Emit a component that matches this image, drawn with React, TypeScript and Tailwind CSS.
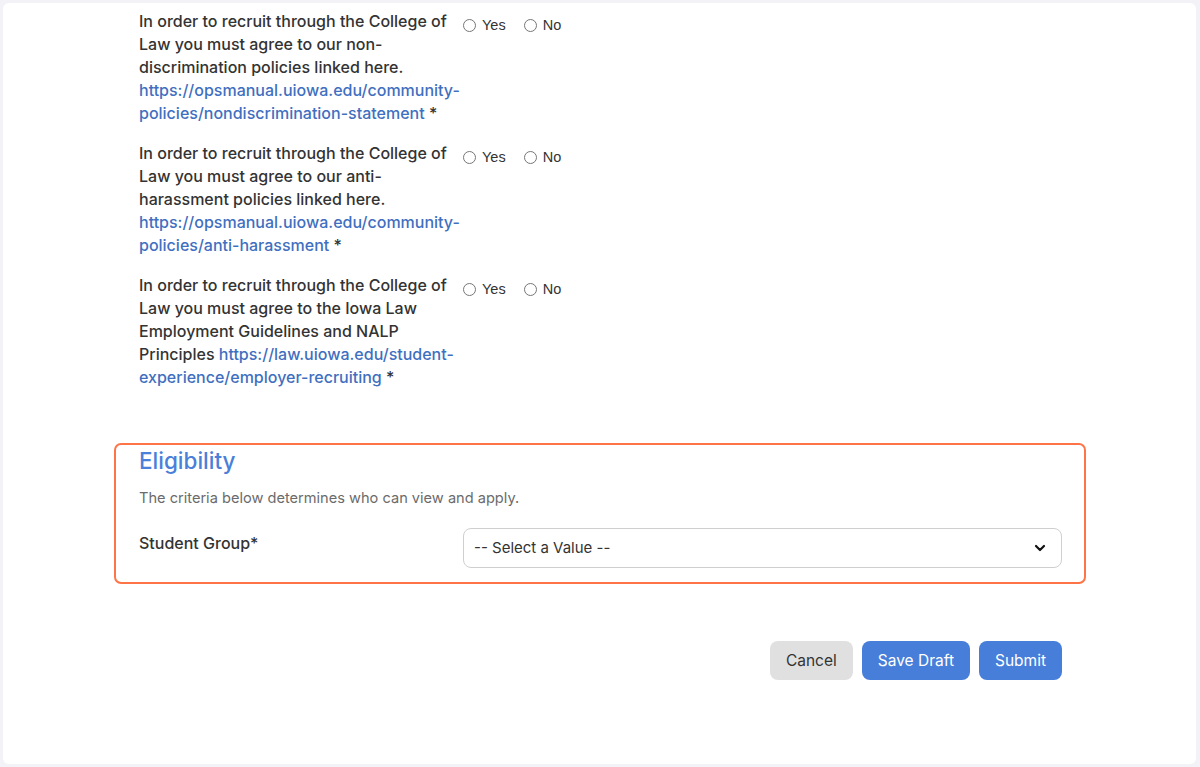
import React from "react";

const Radio = ({ label }: { label: string }) => (
  <label className="flex items-center gap-[6px] text-[14.5px] text-[#333] font-['Liberation_Sans',Arial,sans-serif]">
    <span className="w-[13px] h-[13px] rounded-full border border-[#767676] bg-white inline-block" />
    <span>{label}</span>
  </label>
);

const Question = ({ lines }: { lines: React.ReactNode }) => (
  <div className="grid grid-cols-[324px_auto] items-start">
    <div className="text-[16px] leading-[23px] font-medium text-[#333]">{lines}</div>
    <div className="flex items-center gap-[18px] pt-[6px] h-[25px]">
      <Radio label="Yes" />
      <Radio label="No" />
    </div>
  </div>
);

const Link = ({ children }: { children: React.ReactNode }) => (
  <span className="text-[#3f6fc0]">{children}</span>
);

export default function App() {
  return (
    <div className="min-h-screen bg-[#f3f3f7] pt-[3px] pl-[3px] pr-[4px] pb-[3px] font-['Inter',sans-serif]">
      <div className="bg-white rounded-[6px] h-[761px] pl-[111px] pt-[7px]">
        <div className="w-[972px]">
          <div className="pl-[25px] flex flex-col gap-[17px]">
            <Question
              lines={
                <>
                  In order to recruit through the College of
                  <br />
                  Law you must agree to our non-
                  <br />
                  discrimination policies linked here.
                  <br />
                  <Link>https://opsmanual.uiowa.edu/community-</Link>
                  <br />
                  <Link>policies/nondiscrimination-statement</Link> *
                </>
              }
            />
            <Question
              lines={
                <>
                  In order to recruit through the College of
                  <br />
                  Law you must agree to our anti-
                  <br />
                  harassment policies linked here.
                  <br />
                  <Link>https://opsmanual.uiowa.edu/community-</Link>
                  <br />
                  <Link>policies/anti-harassment</Link> *
                </>
              }
            />
            <Question
              lines={
                <>
                  In order to recruit through the College of
                  <br />
                  Law you must agree to the Iowa Law
                  <br />
                  Employment Guidelines and NALP
                  <br />
                  Principles <Link>https://law.uiowa.edu/student-</Link>
                  <br />
                  <Link>experience/employer-recruiting</Link> *
                </>
              }
            />
          </div>

          <div className="mt-[54px] border-2 border-[#ff7447] rounded-[7px] pl-[23px] pr-[22px] pt-[2px] pb-[14px]">
            <h2 className="text-[22.5px] leading-[28px] font-medium text-[#4a80d9]">Eligibility</h2>
            <p className="mt-[13px] text-[14.6px] leading-[20px] text-[#6b6b6b]">
              The criteria below determines who can view and apply.
            </p>
            <div className="mt-[20px] grid grid-cols-[324px_1fr] items-start">
              <div className="pt-[4px] text-[16px] leading-[23px] font-medium text-[#333]">Student Group*</div>
              <div className="h-[40px] rounded-[8px] border border-[#cfcfcf] bg-white flex items-center justify-between pl-[10px] pr-[15px] text-[15px] text-[#333]">
                <span>-- Select a Value --</span>
                <svg width="12" height="8" viewBox="0 0 12 8" fill="none">
                  <path d="M2 2l4 4 4-4" stroke="#111" strokeWidth="2.2" strokeLinecap="round" strokeLinejoin="round" />
                </svg>
              </div>
            </div>
          </div>

          <div className="mt-[57px] flex justify-end gap-[9px] pr-[24px]">
            <button className="h-[39px] px-[16px] rounded-[8px] bg-[#e0e0e0] text-[15.5px] text-[#333]">Cancel</button>
            <button className="h-[39px] px-[16px] rounded-[8px] bg-[#477ed9] text-[15.5px] text-white">Save Draft</button>
            <button className="h-[39px] px-[16px] rounded-[8px] bg-[#477ed9] text-[15.5px] text-white">Submit</button>
          </div>
        </div>
      </div>
    </div>
  );
}
